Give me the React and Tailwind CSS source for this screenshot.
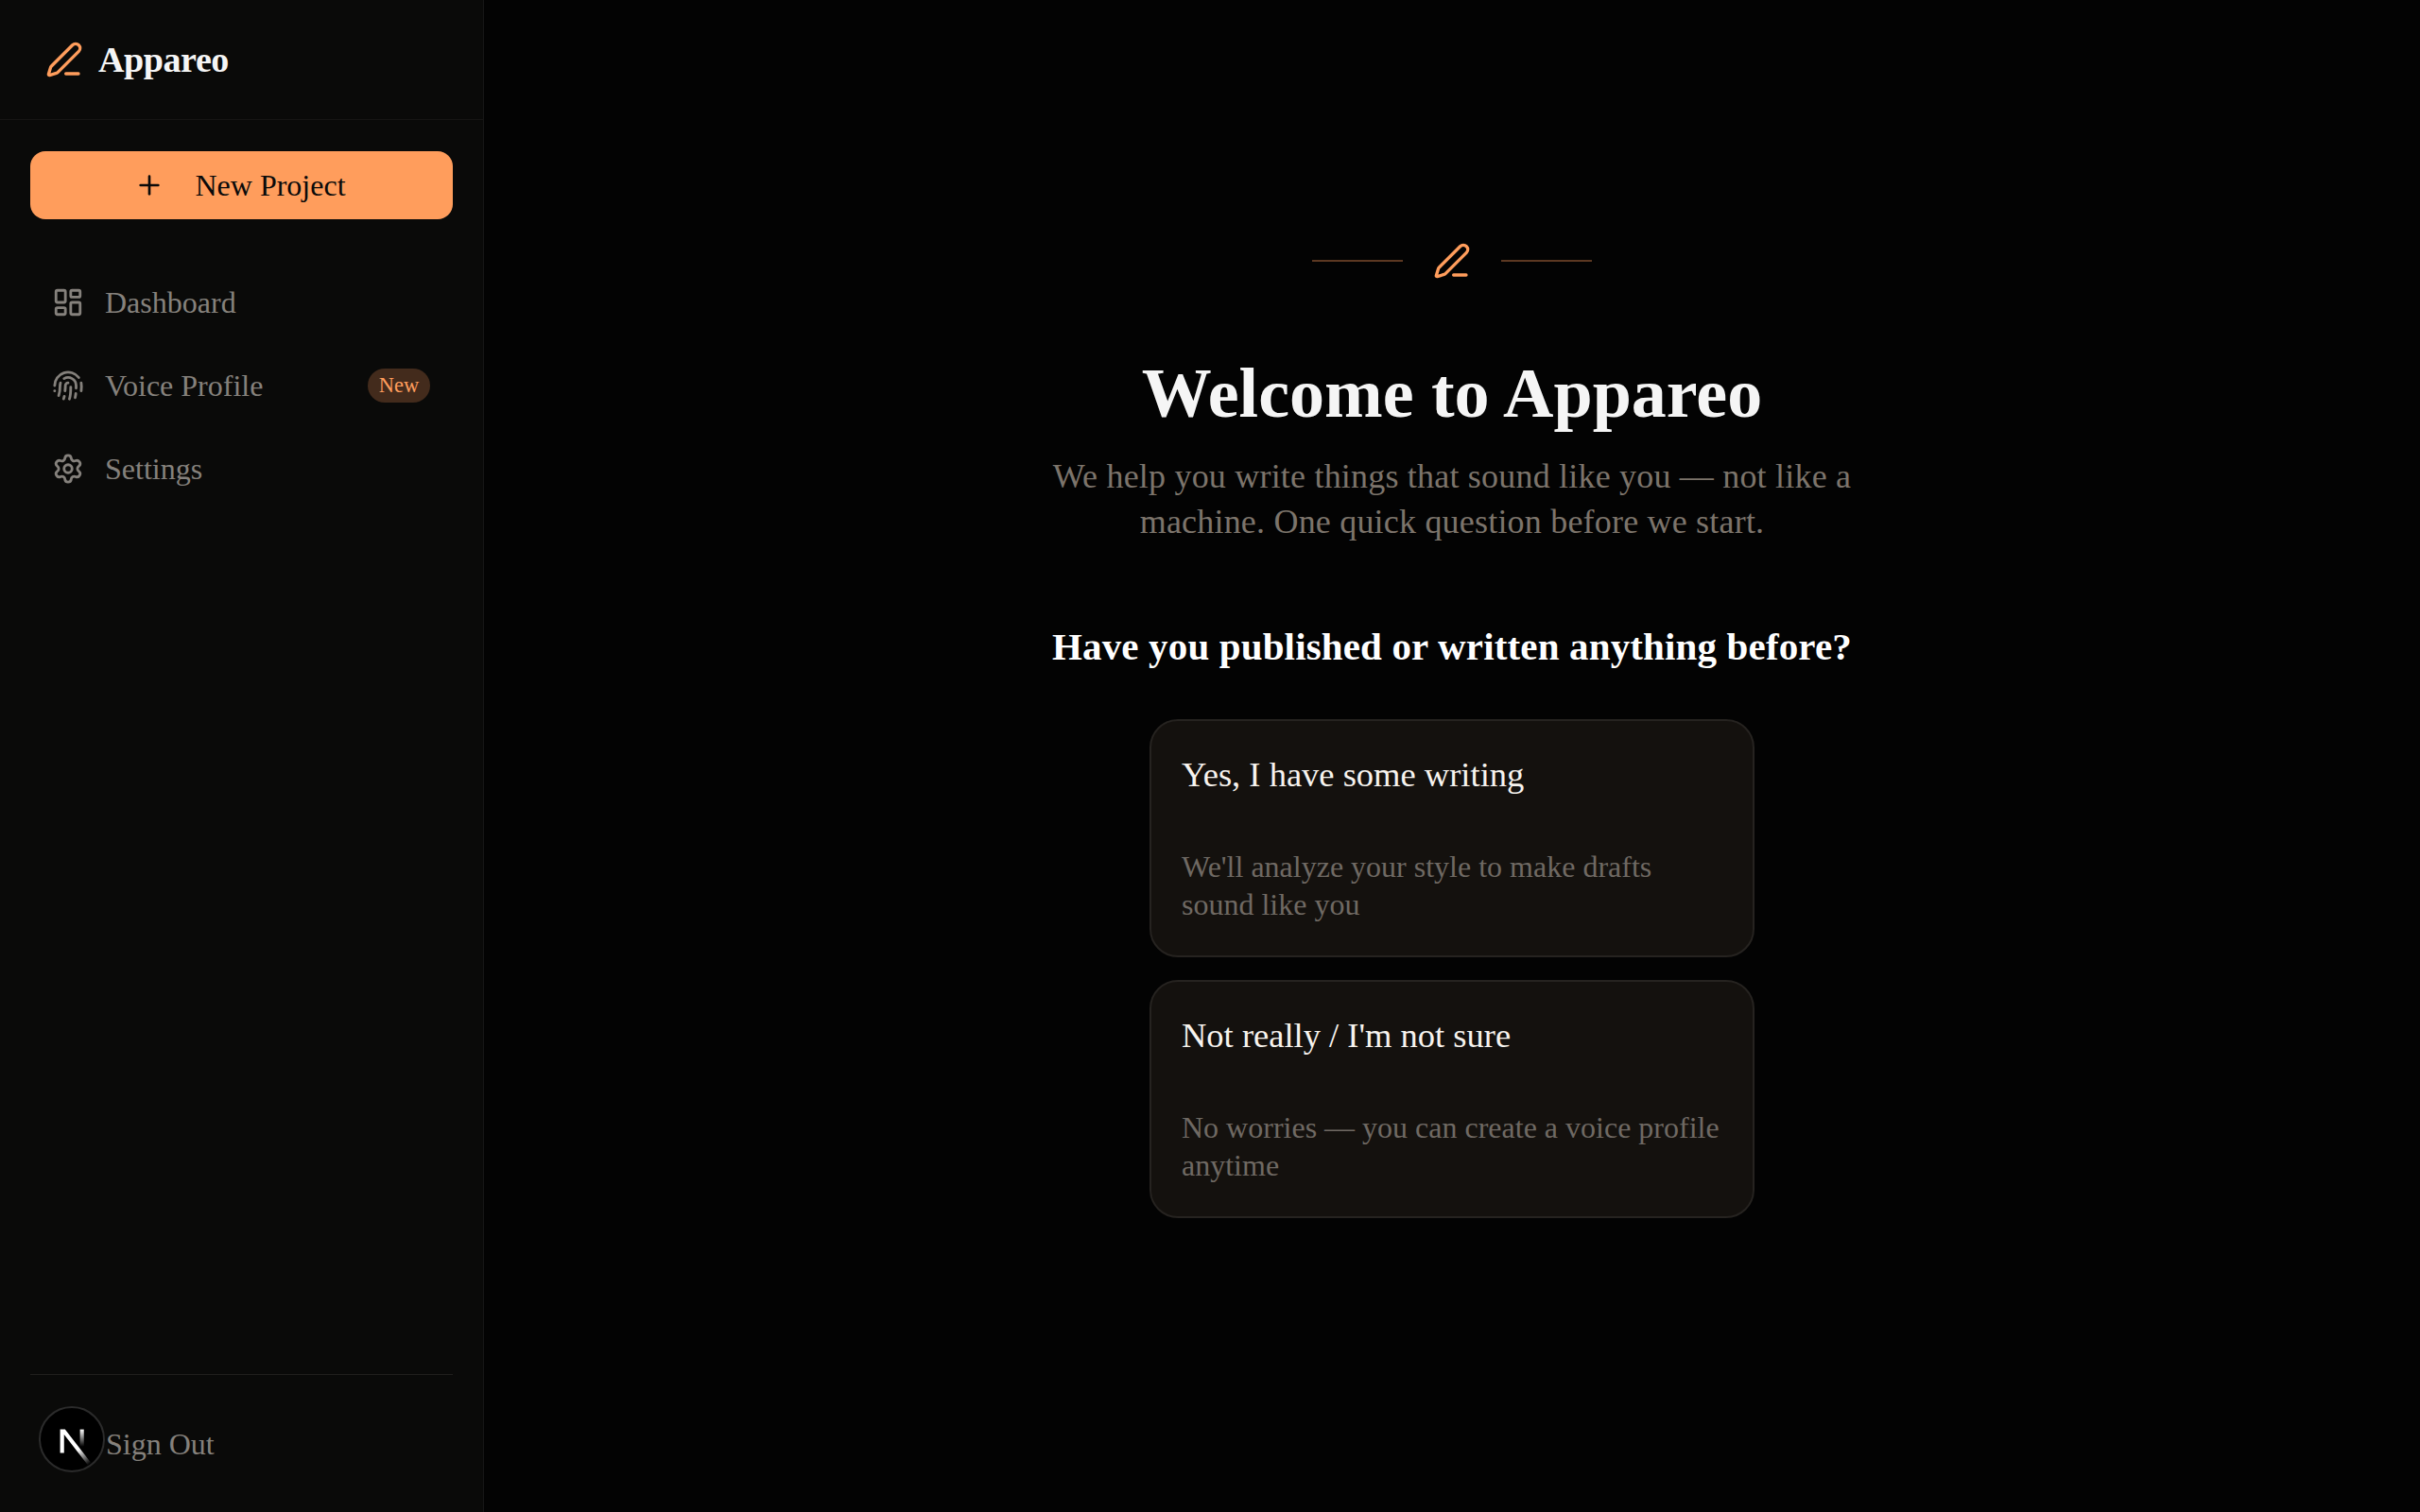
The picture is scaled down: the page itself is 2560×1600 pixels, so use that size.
import React from "react";
import { PenLine, Plus, LayoutDashboard, Fingerprint, Settings } from "lucide-react";

const navItems = [
  { label: "Dashboard", icon: LayoutDashboard },
  { label: "Voice Profile", icon: Fingerprint, badge: "New" },
  { label: "Settings", icon: Settings },
];

const options = [
  {
    title: "Yes, I have some writing",
    text: "We'll analyze your style to make drafts sound like you",
  },
  {
    title: "Not really / I'm not sure",
    text: "No worries — you can create a voice profile anytime",
  },
];

const NextBadge = () => (
  <div className="absolute left-[41px] bottom-[42px] w-[70px] h-[70px] rounded-full bg-black border-2 border-[#2b2b2b] flex items-center justify-center">
    <svg width="62" height="62" viewBox="0 0 180 180" fill="none" className="mt-[4px]">
      <defs>
        <linearGradient id="nGradA" x1="109" y1="116.5" x2="144.5" y2="160.5" gradientUnits="userSpaceOnUse">
          <stop stopColor="white" />
          <stop offset="1" stopColor="white" stopOpacity="0" />
        </linearGradient>
        <linearGradient id="nGradB" x1="121" y1="54" x2="120.8" y2="106.9" gradientUnits="userSpaceOnUse">
          <stop stopColor="white" />
          <stop offset="1" stopColor="white" stopOpacity="0" />
        </linearGradient>
      </defs>
      <path
        d="M149.508 157.52L69.142 54H54V125.97H66.1136V69.3836L139.999 164.845C143.333 162.614 146.509 160.165 149.508 157.52Z"
        fill="url(#nGradA)"
      />
      <rect x="115" y="54" width="12" height="72" fill="url(#nGradB)" />
    </svg>
  </div>
);

const App = () => {
  return (
    <div className="relative flex h-[1600px] bg-[#030303] font-['Liberation_Serif',serif]">
      {/* Sidebar */}
      <aside className="flex flex-col w-[512px] shrink-0 bg-[#0a0a09] border-r border-[#161616]">
        <div className="flex items-center gap-[16px] h-[127px] pl-[48px] border-b border-[#161514]">
          <PenLine size={40} strokeWidth={2} className="text-[#ff9d5c]" />
          <span className="text-[38px] font-bold text-[#f5f5f5] tracking-[-0.4px]">Appareo</span>
        </div>

        <div className="px-[32px] pt-[33px]">
          <button className="flex items-center justify-center gap-[32px] w-full h-[72px] pr-[3px] rounded-[16px] bg-[#ff9d5c] text-[#0a0a0a] text-[32px]">
            <Plus size={32} strokeWidth={2} />
            <span>New Project</span>
          </button>
        </div>

        <nav className="flex flex-col gap-[16px] px-[32px] pt-[52px]">
          {navItems.map((item) => (
            <div key={item.label} className="flex items-center gap-[22px] h-[72px] pl-[23px] pr-[24px] text-[#85817c]">
              <item.icon size={34} strokeWidth={2} />
              <span className="text-[32px]">{item.label}</span>
              {item.badge && (
                <span className="ml-auto flex items-center justify-center w-[66px] h-[36px] rounded-full bg-[#432b1c] text-[#ff9d5c] text-[22.5px]">
                  {item.badge}
                </span>
              )}
            </div>
          ))}
        </nav>

        <div className="mt-auto mx-[32px] border-t border-[#201f1d] h-[146px] flex items-center pl-[80px] text-[#85817c] text-[32px]">
          <span>Sign Out</span>
        </div>
      </aside>

      {/* Main */}
      <main className="flex flex-col items-center flex-1 pt-[258px]">
        <div className="flex items-center gap-[32px] h-[36px]">
          <div className="w-[96px] h-[2px] bg-[#5c3822]" />
          <PenLine size={40} strokeWidth={2} className="text-[#ff9d5c]" />
          <div className="w-[96px] h-[2px] bg-[#5c3822]" />
        </div>

        <h1 className="mt-[82px] text-[74px] leading-[80px] font-bold text-[#f5f5f5]">Welcome to Appareo</h1>

        <p className="mt-[24px] w-[880px] text-center text-[36px] tracking-[0.2px] leading-[48px] text-[#7c746b]">
          We help you write things that sound like you — not like a machine. One quick question before we start.
        </p>

        <h2 className="mt-[78px] text-[41px] tracking-[0.15px] leading-[60px] font-bold text-white">
          Have you published or written anything before?
        </h2>

        <div className="flex flex-col gap-[24px] mt-[47px] w-[640px]">
          {options.map((opt) => (
            <button key={opt.title} className="flex flex-col h-[252px] px-[32px] pt-[33px] text-left rounded-[30px] bg-[#14110e] border-2 border-[#262320]">
              <div className="text-[36.5px] leading-[48px] text-[#f7f3ee]">{opt.title}</div>
              <div className="mt-[53px] text-[32px] leading-[40px] text-[#6f6963]">{opt.text}</div>
            </button>
          ))}
        </div>
      </main>

      <NextBadge />
    </div>
  );
};

export default App;
